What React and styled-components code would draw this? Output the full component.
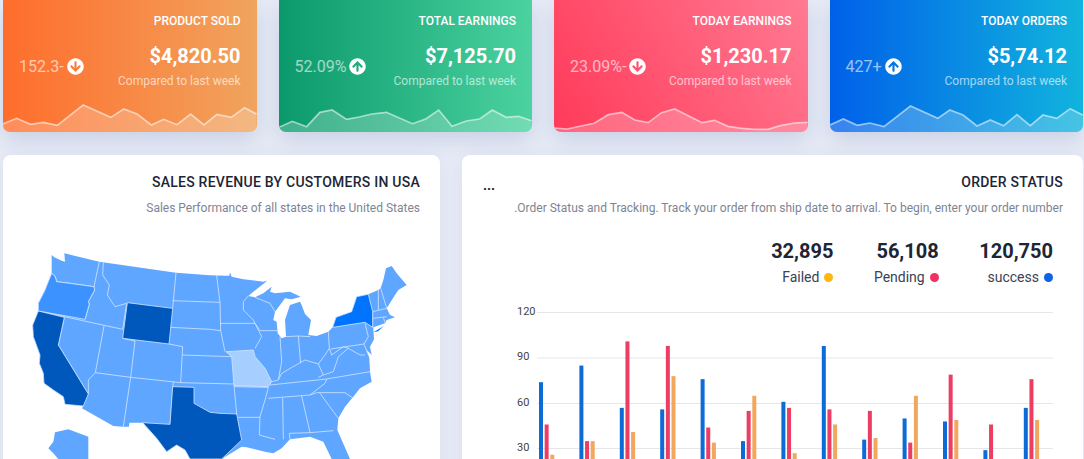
import styled, { createGlobalStyle } from "styled-components";
import { FaArrowCircleDown, FaArrowCircleUp } from "react-icons/fa";

const GlobalStyle = createGlobalStyle`
    html, body {
        margin: 0;
        padding: 0;
        background: #e8ecf7;
    }
    body {
        font-family: Roboto, "Liberation Sans", sans-serif;
    }
`;

const Page = styled.div`
    direction: rtl;
    box-sizing: border-box;
    width: 1084px;
    height: 459px;
    overflow: hidden;
    padding: 0 1px 0 3px;
    background: #e8ecf7;
`;
const CardRow = styled.div`
    display: grid;
    grid-template-columns: repeat(4, 1fr);
    gap: 22px;
    margin-bottom: 23px;
`;
const Card = styled.div`
    position: relative;
    box-sizing: border-box;
    height: 132px;
    padding: 14px 16px 0 16px;
    display: flex;
    justify-content: space-between;
    color: #fff;
    border-radius: 0 0 7px 7px;
    overflow: hidden;
    background: ${(p) => p.$bg};
`;
const CardShadow = styled.div`
    border-radius: 0 0 7px 7px;
    box-shadow: 0 8px 22px rgba(120, 135, 180, 0.28);
`;
const CardText = styled.div`
    text-align: right;
`;
const CardTitle = styled.div`
    font-size: 12px;
    font-weight: 500;
    line-height: 14px;
`;
const CardAmount = styled.div`
    margin-top: 13px;
    font-size: 20px;
    font-weight: 700;
    line-height: 30px;
`;
const CardNote = styled.div`
    margin-top: 2px;
    font-size: 12px;
    line-height: 16px;
    opacity: 0.62;
`;
const Change = styled.div`
    display: flex;
    align-items: center;
    align-self: flex-start;
    gap: 3px;
    margin-top: 40px;
    height: 24px;
    font-size: 16px;
`;
const ChangeValue = styled.span`
    opacity: 0.6;
`;
const Spark = styled.svg`
    position: absolute;
    left: 0;
    bottom: 0;
    width: 100%;
    height: 32px;
    display: block;
`;

const PanelRow = styled.div`
    display: grid;
    grid-template-columns: 621px 437px;
    gap: 22px;
`;
const Panel = styled.div`
    height: 320px;
    background: #fff;
    border-radius: 8px;
    box-shadow: 0 4px 18px rgba(120, 135, 180, 0.14);
    overflow: hidden;
`;
const PanelHead = styled.div`
    display: flex;
    justify-content: space-between;
    align-items: flex-start;
    padding: ${(p) => p.$pad};
`;
const PanelTitle = styled.div`
    color: #1d2636;
    font-size: 14px;
    font-weight: 500;
    line-height: 18px;
    letter-spacing: 0.25px;
`;
const PanelSub = styled.div`
    margin-top: 9px;
    color: #7e8494;
    font-size: 12px;
    line-height: 16px;
`;
const Dots = styled.div`
    color: #1d2636;
    font-size: 14px;
    font-weight: 700;
    line-height: 18px;
    margin-top: 3px;
`;
const MapDrawing = styled.svg`
    display: block;
    width: 437px;
    height: 219px;
    margin-top: 24px;
`;
const Stats = styled.div`
    display: flex;
    gap: 40.5px;
    padding: 0 30px;
    margin-top: 23px;
`;
const Stat = styled.div`
    text-align: right;
`;
const StatValue = styled.div`
    color: #1d2636;
    font-size: 20px;
    font-weight: 700;
    line-height: 24px;
`;
const StatLabel = styled.div`
    display: flex;
    align-items: center;
    justify-content: flex-start;
    gap: 5px;
    margin-top: 4px;
    color: #3a4254;
    font-size: 14px;
    line-height: 20px;
`;
const Dot = styled.span`
    width: 9px;
    height: 9px;
    border-radius: 50%;
    background: ${(p) => p.$color};
`;
const ChartDrawing = styled.svg`
    display: block;
    direction: ltr;
    width: 621px;
    height: 159px;
    margin-top: 14px;
`;

const cards = [
    {
        title: "TODAY ORDERS", amount: "$5,74.12", change: "+427", up: true,
        bg: "linear-gradient(90deg, #0060e9, #11b4dd)",
        line: [[0, 375], [40, 357], [82, 376], [120, 369], [162, 380], [242, 318], [324, 355], [360, 330], [400, 345], [442, 378], [482, 360], [522, 377], [562, 344], [602, 377], [640, 345], [682, 355], [722, 326], [760, 345]],
    },
    {
        title: "TODAY EARNINGS", amount: "$1,230.17", change: "-23.09%", up: false,
        bg: "linear-gradient(60deg, #ff3a5a, #ff7a92)",
        line: [[0, 384], [40, 387], [81, 378], [121, 370], [163, 344], [204, 337], [243, 360], [283, 368], [323, 338], [363, 327], [445, 368], [483, 361], [523, 379], [565, 385], [603, 388], [643, 388], [683, 376], [723, 369], [762, 367]],
    },
    {
        title: "TOTAL EARNINGS", amount: "$7,125.70", change: "52.09%", up: true,
        bg: "linear-gradient(90deg, #0b996b, #4bd2a0)",
        line: [[0, 382], [40, 364], [83, 380], [123, 337], [160, 330], [203, 358], [241, 351], [279, 342], [323, 337], [401, 371], [441, 357], [480, 330], [520, 379], [563, 363], [603, 357], [641, 330], [683, 352], [720, 349], [759, 362]],
    },
    {
        title: "PRODUCT SOLD", amount: "$4,820.50", change: "-152.3", up: false,
        bg: "linear-gradient(90deg, #ff6d2c, #f0a45e)",
        line: [[0, 372], [41, 355], [83, 373], [121, 367], [163, 376], [241, 315], [324, 352], [363, 327], [403, 342], [446, 375], [483, 358], [523, 374], [564, 342], [604, 375], [643, 343], [686, 352], [726, 323], [762, 342]],
    },
];

// [blue, red, orange] for each month
const orders = [
    [74, 46, 26], [85, 35, 35], [57, 101, 41], [56, 98, 78], [76, 44, 34], [35, 55, 65], [61, 57, 27],
    [98, 56, 46], [36, 55, 37], [50, 34, 65], [48, 79, 49], [29, 46, 21], [57, 76, 49],
];
const barColors = ["#0d6bd8", "#ee3d63", "#f2a75f"];
const ticks = [[120, 311.5], [90, 357], [60, 402.5], [30, 447.5]];

// map is traced in 3x units: land outline first, state borders drawn over it
const westLand = "M95,45 L103,52 L125,62 L135,65 L133,40 L238,65 L468,98 L590,107 L610,107 L610,657 L510,657 L495,630 L470,615 L440,635 L410,595 L368,548 L328,548 L327,560 L310,560 L280,558 L186,505 L190,498 L135,493 L130,470 L100,450 L72,430 L70,400 L58,370 L60,345 L40,290 L38,255 L55,213 L55,190 L75,150 L95,100 Z";
const eastLand = "M0,107 L58,107 L60,97 L65,110 L100,118 L120,120 L160,125 L172,122 L130,155 L115,168 L135,172 L160,160 L185,140 L180,155 L195,160 L240,155 L272,170 L245,178 L225,175 L195,215 L190,240 L200,245 L203,280 L215,295 L228,290 L225,240 L240,195 L270,185 L275,195 L285,222 L303,240 L295,285 L320,288 L355,275 L368,262 L378,232 L425,215 L440,170 L475,163 L505,150 L512,145 L520,120 L528,85 L545,78 L560,100 L590,135 L565,150 L555,165 L530,205 L540,225 L555,232 L530,240 L525,250 L490,262 L490,268 L492,298 L480,320 L485,345 L470,330 L478,355 L480,395 L485,425 L450,445 L430,470 L405,500 L385,535 L382,570 L420,657 L365,657 L340,605 L300,590 L240,598 L215,625 L190,640 L165,635 L110,622 L95,620 L35,657 L0,657 Z";
const alaska = "M105,577 L145,568 L205,590 L205,657 L115,657 L100,640 L85,625 L100,605 Z";

const westBorders = [
    "238,65 222,140",
    "95,100 105,108 110,125 150,130 222,140 224,150 205,185 208,192 195,238",
    "55,213 308,268",
    "133,232 115,315 205,462",
    "252,258 226,398 205,420 205,462",
    "250,67 248,105 268,135 262,165 285,200 320,190 308,268",
    "308,295 345,303 332,412",
    "226,398 332,412 482,428 642,432",
    "332,412 310,560",
    "460,425 450,553",
    "447,312 488,320 482,428",
    "468,98 458,205",
    "458,182 600,187",
    "590,107 600,187 602,272 615,335",
    "452,262 570,268 602,272",
    "487,345 635,350",
];
const eastBorders = [
    "115,168 100,185 100,210 130,240 135,250 155,290 135,325",
    "30,250 135,250 150,272 205,272",
    "72,440 175,442 168,470 150,530 148,585 195,598",
    "72,437 80,522",
    "85,532 150,532",
    "135,172 180,190 195,215",
    "210,290 215,365 205,420 185,425",
    "228,290 265,288 300,290",
    "265,288 272,370",
    "205,420 215,400 270,368 285,360 325,372 340,405 325,412",
    "355,275 358,325 345,345 325,372",
    "180,435 350,417 480,395",
    "175,475 300,465 345,430 350,417",
    "300,465 320,458 405,458 430,475",
    "330,460 385,535",
    "218,474 220,598",
    "275,468 300,578",
    "240,598 238,580 300,578 370,572",
    "340,405 370,395 385,350 415,325",
    "358,325 365,345 400,320 415,325 450,345 465,345",
    "362,327 462,312 475,345",
    "465,250 475,290 462,312",
    "505,150 505,210",
    "512,145 530,205 488,215",
    "490,235 530,230",
    "520,232 525,248",
    "488,215 488,262",
];

const UsaMap = () => (
    <MapDrawing viewBox="-51 0 1311 657">
        <g fill="#5ea6ff">
            <path d={westLand} />
            <path d={alaska} />
            <path transform="translate(570 0)" d={eastLand} />
        </g>
        <g fill="none" stroke="#d4e6ff" strokeWidth="2.4" strokeLinejoin="round">
            {westBorders.map((pts) => <polyline key={pts} points={pts} />)}
            <g transform="translate(570 0)">
                {eastBorders.map((pts) => <polyline key={pts} points={pts} />)}
            </g>
        </g>
        <g stroke="#d4e6ff" strokeWidth="2.4" strokeLinejoin="round">
            <path fill="#3c93ff" d="M95,100 L105,108 L110,125 L150,130 L222,140 L224,150 L205,185 L208,192 L195,238 L55,213 L55,190 L75,150 Z" />
            <path fill="#0058bd" d="M55,213 L133,232 L115,315 L205,462 L190,498 L135,493 L130,470 L100,450 L72,430 L70,400 L58,370 L60,345 L40,290 L38,255 Z" />
            <path fill="#0058bd" d="M322,188 L458,205 L447,312 L308,295 Z" />
            <path fill="#0058bd" d="M458,440 L522,442 L522,490 L570,517 L600,520 L650,522 L665,600 L605,657 L510,657 L495,630 L470,615 L440,635 L410,595 L368,548 L450,553 Z" />
            <g transform="translate(570 0)">
                <path fill="#a6cfff" d="M48,335 L130,330 L135,350 L165,385 L185,425 L175,440 L72,437 L65,350 Z" />
                <path fill="#0074ff" d="M368,262 L378,232 L425,215 L440,170 L475,163 L488,215 L488,262 L465,247 Z" />
                <path fill="#0074ff" stroke="none" d="M490,277 L522,258 L504,274 Z" />
            </g>
        </g>
    </MapDrawing>
);

const OrderChart = () => (
    <ChartDrawing viewBox="462 300 621 159">
        {ticks.map(([label, y]) => (
            <g key={label}>
                <line x1="537" x2="1053" y1={y} y2={y} stroke="#e6e6ea" strokeWidth="1" />
                <text x="517" y={y + 2} fontSize="11" fill="#444" fontFamily="Roboto, sans-serif">{label}</text>
            </g>
        ))}
        {orders.map((group, i) =>
            group.map((value, j) => (
                <rect
                    key={`${i}-${j}`}
                    x={539 + i * 40.4 + j * 5.65}
                    y={493 - value * 1.511}
                    width="4"
                    height={value * 1.511}
                    fill={barColors[j]}
                />
            ))
        )}
    </ChartDrawing>
);

const App = () => {
    return (
        <Page>
            <GlobalStyle />
            <CardRow>
                {cards.map((card) => {
                    const pts = card.line.map(([x, y]) => `${x},${y}`).join(" ");
                    return (
                        <CardShadow key={card.title}>
                            <Card $bg={card.bg}>
                                <CardText>
                                    <CardTitle>{card.title}</CardTitle>
                                    <CardAmount>{card.amount}</CardAmount>
                                    <CardNote>Compared to last week</CardNote>
                                </CardText>
                                <Change>
                                    {card.up ? <FaArrowCircleUp size={17} /> : <FaArrowCircleDown size={17} />}
                                    <ChangeValue>{card.change}</ChangeValue>
                                </Change>
                                <Spark viewBox="0 300 762 96" preserveAspectRatio="none">
                                    <polygon points={`0,396 ${pts} 762,396`} fill="rgba(255,255,255,0.22)" />
                                    <polyline points={pts} fill="none" stroke="rgba(255,255,255,0.55)" strokeWidth="5" />
                                </Spark>
                            </Card>
                        </CardShadow>
                    );
                })}
            </CardRow>
            <PanelRow>
                <Panel>
                    <PanelHead $pad="18px 20px 0 21px">
                        <div>
                            <PanelTitle>ORDER STATUS</PanelTitle>
                            <PanelSub>Order Status and Tracking. Track your order from ship date to arrival. To begin, enter your order number.</PanelSub>
                        </div>
                        <Dots>...</Dots>
                    </PanelHead>
                    <Stats>
                        <Stat>
                            <StatValue>120,750</StatValue>
                            <StatLabel><Dot $color="#0b63e5" />success</StatLabel>
                        </Stat>
                        <Stat>
                            <StatValue>56,108</StatValue>
                            <StatLabel><Dot $color="#ee3160" />Pending</StatLabel>
                        </Stat>
                        <Stat>
                            <StatValue>32,895</StatValue>
                            <StatLabel><Dot $color="#fdb612" />Failed</StatLabel>
                        </Stat>
                    </Stats>
                    <OrderChart />
                </Panel>
                <Panel>
                    <PanelHead $pad="18px 20px 0 20px">
                        <div>
                            <PanelTitle>SALES REVENUE BY CUSTOMERS IN USA</PanelTitle>
                            <PanelSub>Sales Performance of all states in the United States</PanelSub>
                        </div>
                    </PanelHead>
                    <UsaMap />
                </Panel>
            </PanelRow>
        </Page>
    );
};

export default App;
